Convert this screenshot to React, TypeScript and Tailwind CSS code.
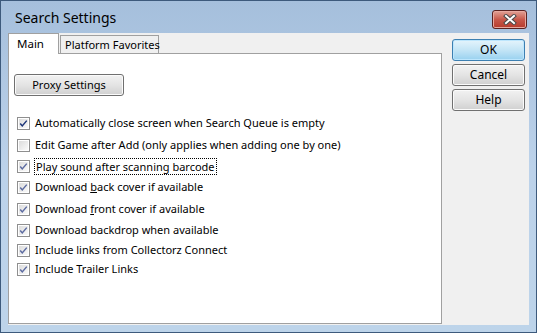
import React from "react";

const font = { fontFamily: '"Noto Sans", "Open Sans", sans-serif' };

type Opt = { label: React.ReactNode; checked: boolean; dark?: boolean; focus?: boolean; h: string };

const options: Opt[] = [
  { label: "Automatically close screen when Search Queue is empty", checked: true, dark: true, h: "h-[22px]" },
  { label: "Edit Game after Add (only applies when adding one by one)", checked: false, h: "h-[21px]" },
  { label: "Play sound after scanning barcode", checked: true, focus: true, h: "h-[21px]" },
  {
    label: (
      <>
        Download <span className="underline">b</span>ack cover if available
      </>
    ),
    checked: true,
    h: "h-[22px]",
  },
  {
    label: (
      <>
        Download <span className="underline">f</span>ront cover if available
      </>
    ),
    checked: true,
    h: "h-[21px]",
  },
  { label: "Download backdrop when available", checked: true, h: "h-[20px]" },
  { label: "Include links from Collectorz Connect", checked: true, h: "h-[19px]" },
  { label: "Include Trailer Links", checked: true, h: "h-[19px]" },
];

const CheckBox = ({ checked, dark }: { checked: boolean; dark?: boolean }) => (
  <div className="w-[13px] h-[13px] shrink-0 border border-[#8f8f8f] bg-white p-px">
    <div className="w-full h-full bg-gradient-to-br from-[#dcdcdc] to-[#fafafa] flex items-center justify-center">
      {checked && (
        <svg width="11" height="11" viewBox="0 0 11 11">
          <path
            d="M1.5 5.5 L4 8.5 L9.5 2"
            fill="none"
            stroke={dark ? "#1c3478" : "#5b6aa0"}
            strokeWidth="1.8"
          />
        </svg>
      )}
    </div>
  </div>
);

const Button = ({ children, primary }: { children: React.ReactNode; primary?: boolean }) => (
  <div
    className={
      primary
        ? "h-[22px] w-[73px] rounded-[3px] border border-[#3c7fb1] bg-gradient-to-b from-[#e5f4fc] via-[#c4e5f6] to-[#98d1ef] flex items-center justify-center text-[12px] text-black shadow-[inset_0_0_0_1px_#bde6fd]"
        : "h-[22px] w-[73px] rounded-[3px] border border-[#707070] bg-gradient-to-b from-[#f2f2f2] via-[#e4e4e4] to-[#d0d0d0] flex items-center justify-center text-[12px] text-black shadow-[inset_0_0_0_1px_#fbfbfb]"
    }
  >
    {children}
  </div>
);

export default function App() {
  return (
    <div
      className="w-[537px] h-[333px] border border-[#3d5a7c] bg-gradient-to-b from-[#a5bfdc] via-[#bcd2ea] to-[#bdd4ea] flex flex-col"
      style={font}
    >
      <div className="h-[32px] flex items-start justify-between pl-[14px] pr-[9px]">
        <div className="text-[14px] text-black mt-[7px] leading-[20px]">Search Settings</div>
        <div className="mt-[9px] w-[35px] h-[19px] rounded-[3px] border border-[#5a2220] bg-gradient-to-b from-[#e0a297] via-[#c8584a] to-[#b63a2c] flex items-center justify-center shadow-[inset_0_0_0_1px_#e8a99f]">
          <svg width="14" height="11" viewBox="0 0 14 11">
            <path d="M3 2 L11 9 M11 2 L3 9" stroke="#4a4a4a" strokeWidth="4" strokeLinecap="square" />
            <path d="M3 2 L11 9 M11 2 L3 9" stroke="#ffffff" strokeWidth="2" strokeLinecap="square" />
          </svg>
        </div>
      </div>
      <div className="mx-[7px] h-[292px] bg-[#f0f0f0] flex text-[11px] text-black">
        <div className="w-[434px] flex flex-col">
          <div className="h-[20px] flex items-end relative z-10">
            <div className="w-[51px] h-[21px] border border-b-0 border-[#a0a0a0] bg-white pl-[8px] pt-[2px] mb-[-1px] leading-[16px] text-[11.5px]">
              Main
            </div>
            <div className="ml-[1px] w-[99px] h-[18px] border border-b-0 border-[#a0a0a0] bg-[#f0f0f0] pl-[4px] leading-[17px] whitespace-nowrap">
              Platform Favorites
            </div>
          </div>
          <div className="h-[271px] border border-[#a0a0a0] bg-white pl-[5px] pt-[20px]">
            <div className="w-[110px] h-[22px] rounded-[3px] border border-[#707070] bg-gradient-to-b from-[#f2f2f2] via-[#e4e4e4] to-[#d0d0d0] flex items-center justify-center shadow-[inset_0_0_0_1px_#fbfbfb]">
              Proxy Settings
            </div>
            <div className="mt-[21px] pl-[3px] flex flex-col">
              {options.map((o, i) => (
                <div key={i} className={`${o.h} flex items-start`}>
                  <CheckBox checked={o.checked} dark={o.dark} />
                  <div
                    className={
                      o.focus
                        ? "ml-[4px] mt-[-2px] leading-[15px] border border-dotted border-black px-px"
                        : "ml-[5px] mt-[-2px] leading-[15px]"
                    }
                  >
                    {o.label}
                  </div>
                </div>
              ))}
            </div>
          </div>
        </div>
        <div className="ml-[10px] pt-[6px] flex flex-col gap-[3px]">
          <Button primary>OK</Button>
          <Button>Cancel</Button>
          <Button>Help</Button>
        </div>
      </div>
    </div>
  );
}
